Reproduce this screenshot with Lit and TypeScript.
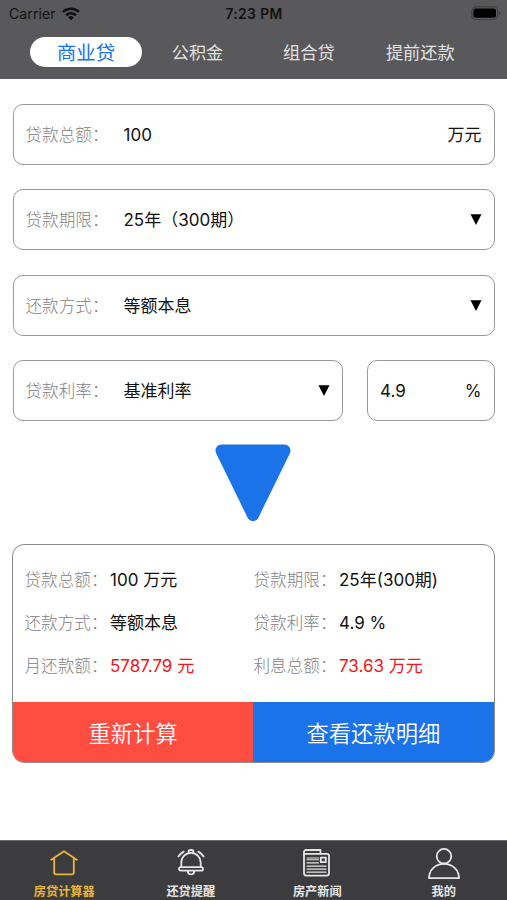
import { LitElement, html, css, svg } from "lit";
import { customElement } from "lit/decorators.js";

const icons = {
  home: svg`<path d="M1.2 10.8 14 2.2l12.8 8.6M4.2 9.4v14.2a1.8 1.8 0 0 0 1.8 1.8h16a1.8 1.8 0 0 0 1.8-1.8V9.4"/>`,
  bell: svg`<path d="M4.3 18.2v-4.7a9.7 9.7 0 0 1 19.4 0v4.7"/><rect x="2" y="18.2" width="24" height="3.5" rx="1.7"/><path d="M11.6 4.1V2.8a1.8 1.8 0 0 1 1.8-1.8h1.2a1.8 1.8 0 0 1 1.8 1.8v1.3M10.8 22.2a3.2 3.2 0 0 0 6.4 0M1.4 7.5a15 15 0 0 1 5.3-4.9M26.6 7.5a15 15 0 0 0-5.3-4.9"/>`,
  news: svg`<path d="M1 5.8V3a2 2 0 0 1 2-2h14.5v3.7"/><path d="M1 4.8h23a2 2 0 0 1 2 2V24a2.6 2.6 0 0 1-2.6 2.6H3.6A2.6 2.6 0 0 1 1 24z"/><rect x="17.8" y="8.6" width="5" height="4.6"/><path d="M4 13.8h11.5M4 17.2h19M4 20.2h19M4 23.2h19" stroke-width="1.2"/><path d="M4 9h11.5M4 10.8h11.5" stroke-width="1.1" stroke-dasharray="2.2 .6"/>`,
  user: svg`<circle cx="16" cy="8.2" r="7.3"/><path d="M1 30.2c0-8.5 6.6-14.4 15-14.4s15 5.9 15 14.4z"/>`,
};

@customElement("app-root")
export class AppRoot extends LitElement {
  static styles = css`
    :host {
      display: flex;
      flex-direction: column;
      box-sizing: border-box;
      height: 900px;
      background: #fff;
      color: #111;
      font: 17px/24px Inter, "Noto Sans CJK SC", sans-serif;
      white-space: nowrap;
    }
    * { box-sizing: border-box; }
    svg { display: block; flex: none; }
    .top { height: 79px; background: #59595b; flex: none; }
    .status {
      display: grid;
      grid-template-columns: 1fr auto 1fr;
      align-items: center;
      height: 27px;
      padding: 0 6px 0 9px;
      color: #111;
      font-size: 14px;
    }
    .carrier { display: flex; align-items: center; gap: 6px; letter-spacing: .1px; }
    .time { font-weight: 600; font-size: 13.8px; letter-spacing: .4px; margin-right: 2px; }
    .battery { justify-self: end; }
    .tabs {
      display: grid;
      grid-template-columns: repeat(4, 111.4px);
      justify-content: center;
      padding: 10.4px .6px 0 0;
      height: 52px;
    }
    .tab {
      height: 29.6px;
      line-height: 32px;
      text-align: center;
      color: #e2e2e2;
      font-size: 17.2px;
    }
    .on { background: #fff; border-radius: 15px; color: #1a73e8; font-size: 19.5px; line-height: 33px; }
    .main {
      flex: 1;
      display: flex;
      flex-direction: column;
      padding: 24.5px 12.5px 0;
    }
    .form { display: grid; gap: 24.5px; }
    .line { display: grid; grid-template-columns: 330px 127.5px; gap: 24.5px; }
    .field {
      display: flex;
      align-items: center;
      height: 61px;
      padding: 1px 12px 0;
      border: 1.5px solid #999;
      border-radius: 10px;
    }
    .label { color: #828282; font-size: 16.6px; font-weight: 300; flex: none; }
    .field .label { width: 98px; }
    .value { flex: 1; }
    .down { margin: 23px auto 0; transform: translateX(-1px); }
    .result {
      margin: 21.5px 0 0 -.5px;
      height: 219.5px;
      border: 1.5px solid #8c8c8c;
      border-radius: 12px;
      overflow: hidden;
      display: flex;
      flex-direction: column;
      background: #fff;
    }
    .facts {
      flex: 1;
      display: grid;
      grid-template-columns: 229px 1fr;
      grid-auto-rows: 43px;
      padding: 14.3px 0 0 11.5px;
      align-items: center;
    }
    .fact { display: flex; }
    .fact .label { width: 85.5px; }
    .money { color: #f5141c; }
    .actions { display: grid; grid-template-columns: 1fr 1fr; height: 60.5px; }
    .action {
      line-height: 63px;
      text-align: center;
      color: #fff;
      font-size: 22.3px;
      font-weight: 350;
    }
    .again { background: #ff4d42; }
    .detail { background: #1a73e8; }
    .nav {
      flex: none;
      height: 60px;
      background: #3c3c3e;
      border-top: 1px solid #69696b;
      display: grid;
      grid-template-columns: repeat(4, 1fr);
      padding-left: 1px;
    }
    .item {
      display: flex;
      flex-direction: column;
      align-items: center;
      color: #e6e6e6;
      font-size: 12.2px;
      font-weight: 700;
      line-height: 16px;
    }
    .glyph {
      height: 43px;
      padding-top: 1px;
      display: flex;
      align-items: center;
      fill: none;
      stroke: currentColor;
      stroke-width: 1.8;
      stroke-linejoin: round;
      stroke-linecap: round;
    }
    .current { color: #e8b535; }
  `;

  private arrow = html`<svg width="12" height="12" viewBox="0 0 12 12"><path d="M.5.2h11L6 11z"/></svg>`;

  private fact(label: string, value: string, money = false) {
    return html`<div class="fact"><span class="label">${label}：</span><span class=${money ? "money" : ""}>${value}</span></div>`;
  }

  private field(label: string, value: string, end: unknown) {
    return html`<div class="field"><span class="label">${label}：</span><span class="value">${value}</span>${end}</div>`;
  }

  private item(label: string, icon: unknown, w: number, h: number, current = false) {
    return html`<div class="item ${current ? "current" : ""}">
      <div class="glyph"><svg width=${w} height=${h} viewBox="0 0 ${w} ${h}">${icon}</svg></div>
      <span>${label}</span>
    </div>`;
  }

  render() {
    return html`
      <header class="top">
        <div class="status">
          <div class="carrier">
            Carrier
            <svg width="18" height="14" viewBox="0 0 18 14">
              <g fill="none" stroke="#111" stroke-width="2.4">
                <path d="M1 5a11.4 11.4 0 0 1 16 0M4.1 8.3a7 7 0 0 1 9.8 0"/>
              </g>
              <path d="M6.2 10.4a4 4 0 0 1 5.6 0L9 13.3z" fill="#111"/>
            </svg>
          </div>
          <div class="time">7:23 PM</div>
          <svg class="battery" width="30" height="15" viewBox="0 0 30 15">
            <rect x=".7" y=".9" width="26" height="12.6" rx="4" fill="none" stroke="#414143" stroke-width="1.2"/>
            <rect x="2.4" y="2.6" width="22.6" height="9.2" rx="2.5" fill="#000"/>
            <path d="M28 5.2a2.2 2.2 0 0 1 0 4z" fill="#414143"/>
          </svg>
        </div>
        <nav class="tabs">
          <div class="tab on">商业贷</div>
          <div class="tab">公积金</div>
          <div class="tab">组合贷</div>
          <div class="tab">提前还款</div>
        </nav>
      </header>
      <main class="main">
        <div class="form">
          ${this.field("贷款总额", "100", html`<span>万元</span>`)}
          ${this.field("贷款期限", "25年（300期）", this.arrow)}
          ${this.field("还款方式", "等额本息", this.arrow)}
          <div class="line">
            ${this.field("贷款利率", "基准利率", this.arrow)}
            <div class="field"><span class="value">4.9</span><span>%</span></div>
          </div>
        </div>
        <svg class="down" width="76" height="78" viewBox="0 0 76 78">
          <path d="M6.5 6.5h63L38 71z" fill="#1a73e8" stroke="#1a73e8" stroke-width="12" stroke-linejoin="round"/>
        </svg>
        <section class="result">
          <div class="facts">
            ${this.fact("贷款总额", "100 万元")}
            ${this.fact("贷款期限", "25年(300期)")}
            ${this.fact("还款方式", "等额本息")}
            ${this.fact("贷款利率", "4.9 %")}
            ${this.fact("月还款额", "5787.79 元", true)}
            ${this.fact("利息总额", "73.63 万元", true)}
          </div>
          <div class="actions">
            <div class="action again">重新计算</div>
            <div class="action detail">查看还款明细</div>
          </div>
        </section>
      </main>
      <footer class="nav">
        ${this.item("房贷计算器", icons.home, 28, 28, true)}
        ${this.item("还贷提醒", icons.bell, 28, 28)}
        ${this.item("房产新闻", icons.news, 28, 28)}
        ${this.item("我的", icons.user, 32, 31)}
      </footer>
    `;
  }
}
